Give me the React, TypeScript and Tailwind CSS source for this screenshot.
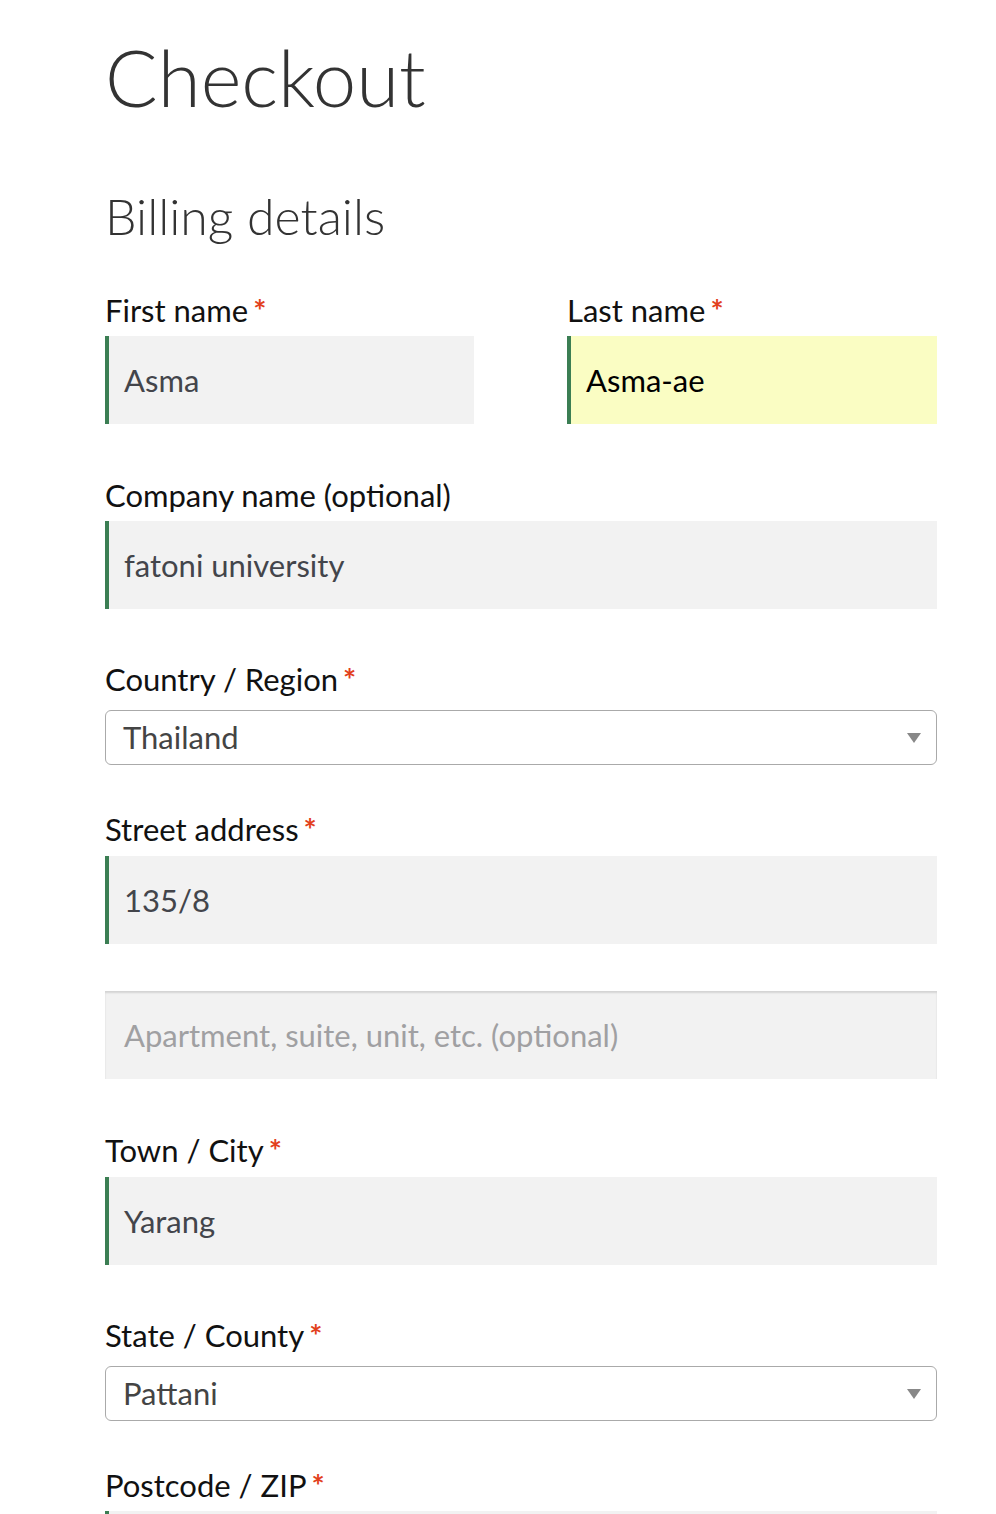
import React from "react";

const Req = () => <span className="text-[#e2401c] ml-[5px] font-bold">*</span>;

function Label({ text, req }: { text: string; req?: boolean }) {
  return (
    <div className="text-[31px] leading-[40px] text-[#111111]">
      {text}
      {req && <Req />}
    </div>
  );
}

function Field({
  value,
  yellow,
  placeholder,
  green = true,
}: {
  value?: string;
  yellow?: boolean;
  placeholder?: string;
  green?: boolean;
}) {
  return (
    <div
      className={
        "h-[88px] flex items-center text-[31px] " +
        (green ? "border-l-[4px] border-[#3b7e53] pl-[15px] " : "pl-[19px] shadow-[inset_0_2px_2px_rgba(0,0,0,0.125)] ") +
        (yellow ? "bg-[#fafdc3] text-black" : "bg-[#f2f2f2] text-[#43454b]")
      }
    >
      {placeholder ? <span className="text-[#a0a0a2]">{placeholder}</span> : value}
    </div>
  );
}

function Select({ value }: { value: string }) {
  return (
    <div className="h-[55px] border border-[#aaaaaa] rounded-[6px] flex items-center justify-between pl-[17px] pr-[15px] text-[31px] text-[#444444]">
      <span>{value}</span>
      <span className="w-0 h-0 border-l-[7px] border-r-[7px] border-t-[10px] border-l-transparent border-r-transparent border-t-[#888888]" />
    </div>
  );
}

export default function App() {
  return (
    <div
      className="bg-white min-h-[1514px] pl-[105px] overflow-hidden"
      style={{ fontFamily: "Lato, 'Noto Sans', sans-serif" }}
    >
      <div className="w-[832px]">
        <h1 className="text-[78px] leading-[78px] font-light text-[#333333] pt-[38px]">Checkout</h1>
        <h3 className="text-[50px] leading-[50px] font-light text-[#333333] mt-[75px]">Billing details</h3>

        <div className="flex justify-between mt-[49px]">
          <div className="w-[369px]">
            <Label text="First name" req />
            <div className="mt-[6px]">
              <Field value="Asma" />
            </div>
          </div>
          <div className="w-[370px]">
            <Label text="Last name" req />
            <div className="mt-[6px]">
              <Field value="Asma-ae" yellow />
            </div>
          </div>
        </div>

        <div className="mt-[51px]">
          <Label text="Company name (optional)" />
          <div className="mt-[6px]">
            <Field value="fatoni university" />
          </div>
        </div>

        <div className="mt-[50px]">
          <Label text="Country / Region" req />
          <div className="mt-[11px]">
            <Select value="Thailand" />
          </div>
        </div>

        <div className="mt-[44px]">
          <Label text="Street address" req />
          <div className="mt-[7px]">
            <Field value="135/8" />
          </div>
          <div className="mt-[47px]">
            <Field green={false} placeholder="Apartment, suite, unit, etc. (optional)" />
          </div>
        </div>

        <div className="mt-[51px]">
          <Label text="Town / City" req />
          <div className="mt-[7px]">
            <Field value="Yarang" />
          </div>
        </div>

        <div className="mt-[50px]">
          <Label text="State / County" req />
          <div className="mt-[11px]">
            <Select value="Pattani" />
          </div>
        </div>

        <div className="mt-[44px]">
          <Label text="Postcode / ZIP" req />
          <div className="mt-[6px]">
            <Field value="" />
          </div>
        </div>
      </div>
    </div>
  );
}
